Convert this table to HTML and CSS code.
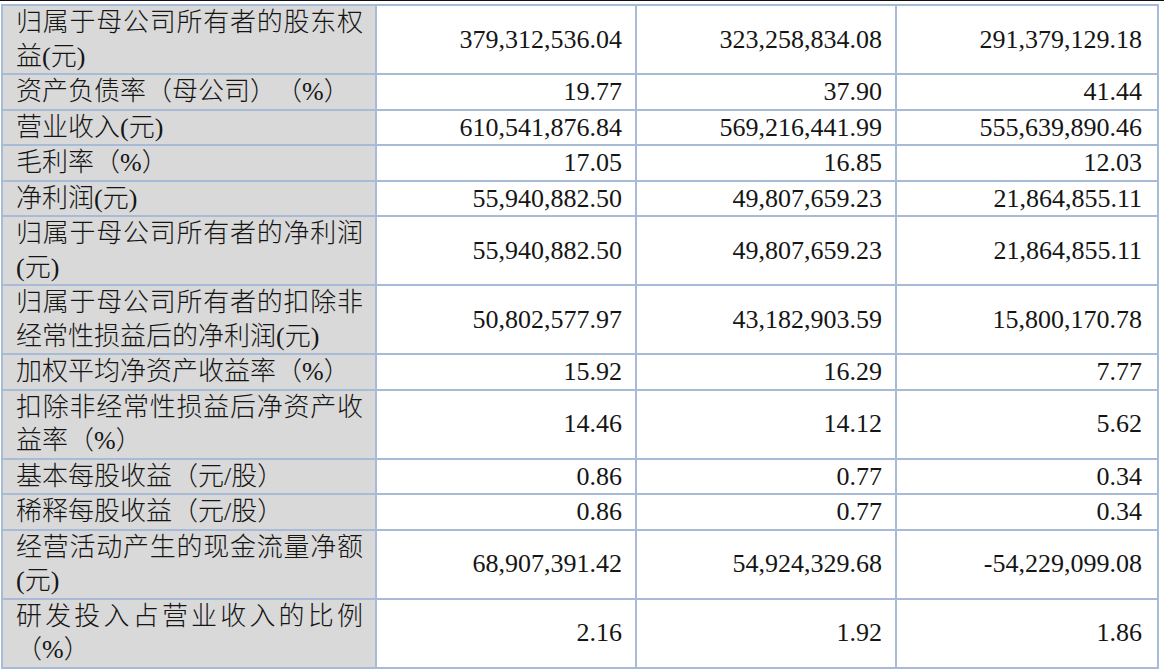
FILE: index.html
```html
<!DOCTYPE html>
<html lang="zh-CN">
<head>
<meta charset="utf-8">
<link rel="stylesheet" href="styles.css">
</head>
<body>
<div class="topline"></div>
<table class="fin">
  <colgroup>
    <col class="c-label"><col class="c-num"><col class="c-num"><col class="c-last">
  </colgroup>
  <tbody>
    <tr><td class="label">归属于母公司所有者的股东权益(元)</td><td>379,312,536.04</td><td>323,258,834.08</td><td>291,379,129.18</td></tr>
    <tr><td class="label">资产负债率（母公司）（%）</td><td>19.77</td><td>37.90</td><td>41.44</td></tr>
    <tr><td class="label">营业收入(元)</td><td>610,541,876.84</td><td>569,216,441.99</td><td>555,639,890.46</td></tr>
    <tr><td class="label">毛利率（%）</td><td>17.05</td><td>16.85</td><td>12.03</td></tr>
    <tr><td class="label">净利润(元)</td><td>55,940,882.50</td><td>49,807,659.23</td><td>21,864,855.11</td></tr>
    <tr><td class="label">归属于母公司所有者的净利润(元)</td><td>55,940,882.50</td><td>49,807,659.23</td><td>21,864,855.11</td></tr>
    <tr><td class="label">归属于母公司所有者的扣除非经常性损益后的净利润(元)</td><td>50,802,577.97</td><td>43,182,903.59</td><td>15,800,170.78</td></tr>
    <tr><td class="label">加权平均净资产收益率（%）</td><td>15.92</td><td>16.29</td><td>7.77</td></tr>
    <tr><td class="label">扣除非经常性损益后净资产收益率（%）</td><td>14.46</td><td>14.12</td><td>5.62</td></tr>
    <tr><td class="label">基本每股收益（元/股）</td><td>0.86</td><td>0.77</td><td>0.34</td></tr>
    <tr><td class="label">稀释每股收益（元/股）</td><td>0.86</td><td>0.77</td><td>0.34</td></tr>
    <tr><td class="label">经营活动产生的现金流量净额(元)</td><td>68,907,391.42</td><td>54,924,329.68</td><td>-54,229,099.08</td></tr>
    <tr><td class="label">研发投入占营业收入的比例（%）</td><td>2.16</td><td>1.92</td><td>1.86</td></tr>
  </tbody>
</table>
</body>
</html>
```

FILE: styles.css
```css
html, body {
  margin: 0;
  padding: 0;
  background: #ffffff;
}

.topline {
  height: 1px;
  background: #111111;
}

.fin {
  margin: 3px 0 0 1px;
  border-collapse: collapse;
  table-layout: fixed;
  width: 1156px;
  font-family: "Liberation Serif", "Noto Sans CJK SC", serif;
  font-size: 26px;
  color: #151515;
  text-spacing-trim: space-all;
}

.c-label { width: 374px; }
.c-num { width: 260px; }
.c-last { width: 262px; }

.fin td {
  border: 2px solid #a7bad6;
  padding: 0 13px 0 13px;
  line-height: 33.5px;
  text-align: right;
  vertical-align: middle;
  white-space: nowrap;
}

.fin td:last-child {
  padding-right: 15px;
}

.fin td.label {
  background: #d9d9d9;
  text-align: justify;
  white-space: normal;
  padding: 0 12px 0 13px;
  vertical-align: top;
  font-weight: 300;
}
```
